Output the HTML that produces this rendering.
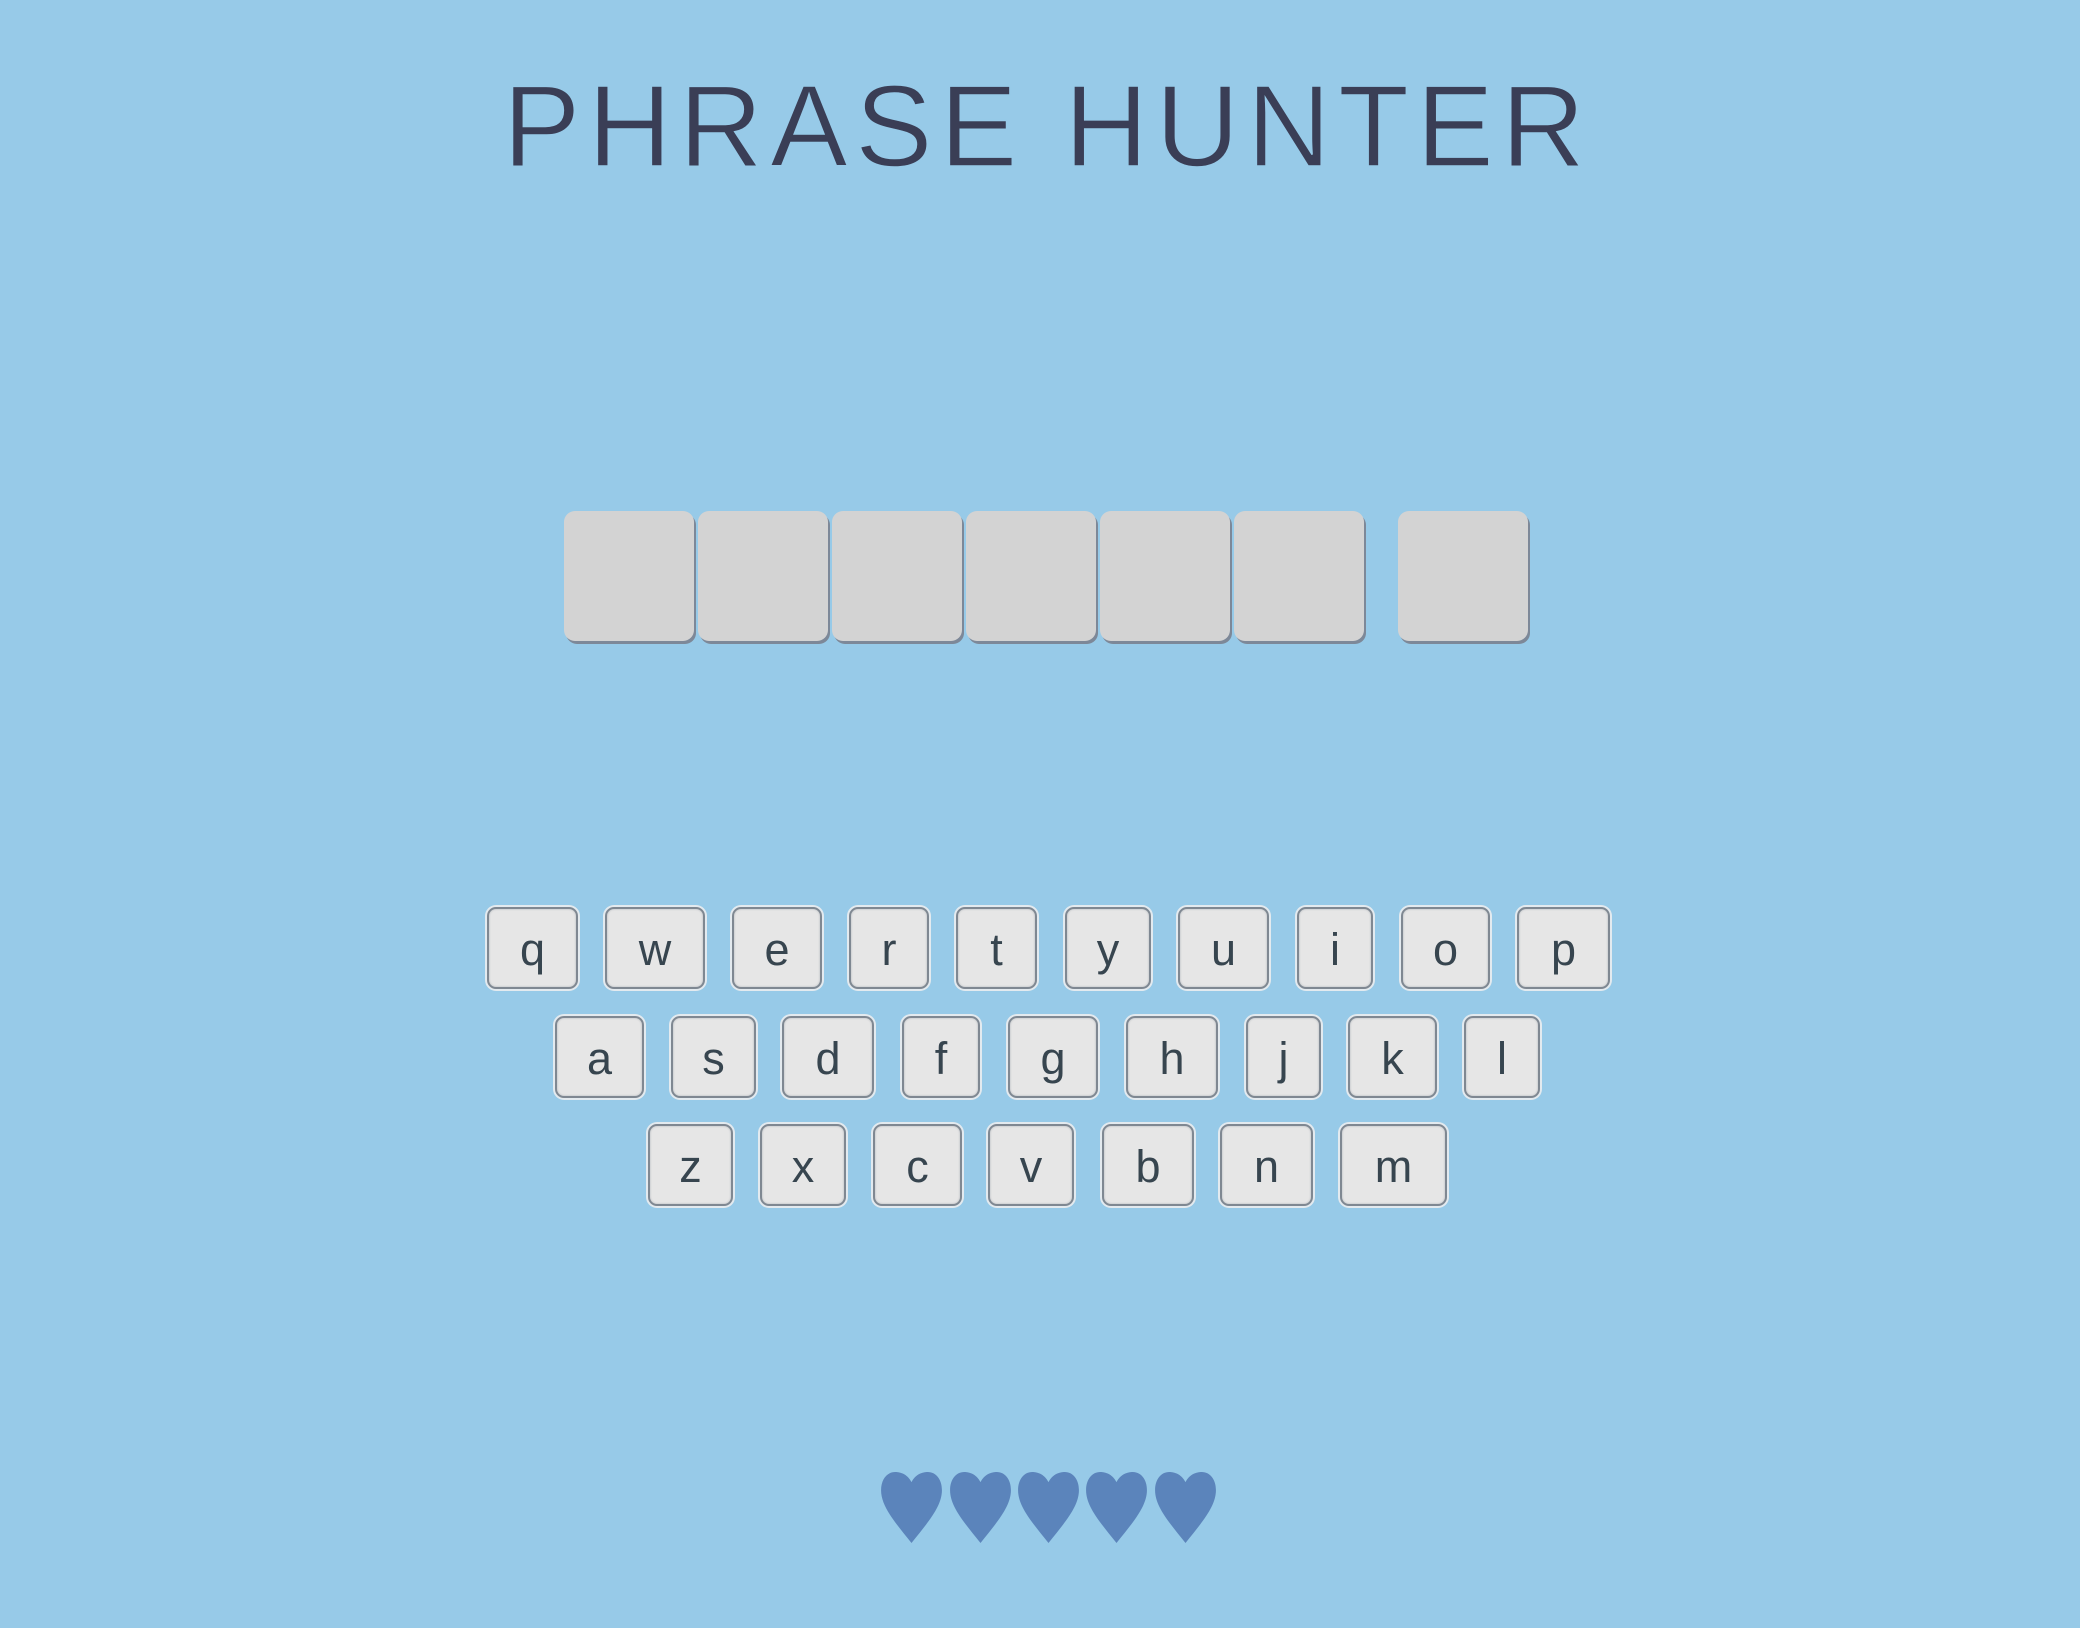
<!DOCTYPE html>
<html><head><meta charset="utf-8"><style>
html,body{margin:0;padding:0}
body{width:2080px;height:1628px;background:#97cae8;position:relative;overflow:hidden;font-family:"Liberation Sans",sans-serif}
.t{position:absolute;left:0;top:0}
.b{position:absolute;width:130px;height:130px;top:511px;background:#d3d3d3;border-radius:11px;box-shadow:2px 3px 0 #7d8898}
.k{position:absolute;box-sizing:border-box;height:82px;background:#e6e6e6;border:2px solid #7f8892;box-shadow:0 0 0 2px #e3eaef, inset 0 0 2px #b0b5ba;border-radius:9px;color:#37454f;font-size:45px;text-align:center;line-height:82px}
.h{position:absolute;top:1472px;width:61px;height:71px}
</style></head><body>
<svg class="t" width="2080" height="200"><text x="503" y="166" font-family="Liberation Sans, sans-serif" font-size="116" fill="#3a3e56" stroke="#97cae8" stroke-width="1.5" textLength="1082" lengthAdjust="spacing">PHRASE HUNTER</text></svg>

<div class="b" style="left:564px"></div>
<div class="b" style="left:698px"></div>
<div class="b" style="left:832px"></div>
<div class="b" style="left:966px"></div>
<div class="b" style="left:1100px"></div>
<div class="b" style="left:1234px"></div>
<div class="b" style="left:1398px"></div>

<div class="k" style="top:907px;left:487px;width:91px">q</div>
<div class="k" style="top:907px;left:605px;width:100px">w</div>
<div class="k" style="top:907px;left:732px;width:90px">e</div>
<div class="k" style="top:907px;left:849px;width:80px">r</div>
<div class="k" style="top:907px;left:956px;width:81px">t</div>
<div class="k" style="top:907px;left:1065px;width:86px">y</div>
<div class="k" style="top:907px;left:1178px;width:91px">u</div>
<div class="k" style="top:907px;left:1297px;width:76px">i</div>
<div class="k" style="top:907px;left:1401px;width:89px">o</div>
<div class="k" style="top:907px;left:1517px;width:93px">p</div>

<div class="k" style="top:1016px;left:555px;width:89px">a</div>
<div class="k" style="top:1016px;left:671px;width:85px">s</div>
<div class="k" style="top:1016px;left:782px;width:92px">d</div>
<div class="k" style="top:1016px;left:902px;width:78px">f</div>
<div class="k" style="top:1016px;left:1008px;width:90px">g</div>
<div class="k" style="top:1016px;left:1126px;width:92px">h</div>
<div class="k" style="top:1016px;left:1246px;width:75px">j</div>
<div class="k" style="top:1016px;left:1348px;width:89px">k</div>
<div class="k" style="top:1016px;left:1464px;width:76px">l</div>

<div class="k" style="top:1124px;left:648px;width:85px">z</div>
<div class="k" style="top:1124px;left:760px;width:86px">x</div>
<div class="k" style="top:1124px;left:873px;width:89px">c</div>
<div class="k" style="top:1124px;left:988px;width:86px">v</div>
<div class="k" style="top:1124px;left:1102px;width:92px">b</div>
<div class="k" style="top:1124px;left:1220px;width:93px">n</div>
<div class="k" style="top:1124px;left:1340px;width:107px">m</div>

<svg class="h" style="left:881px" viewBox="0 0 60 70"><path d="M30 10C26 2 19 0 14 0C6 0 0 7 0 18C0 34 14 50 30 70C46 50 60 34 60 18C60 7 54 0 46 0C41 0 34 2 30 10Z" fill="#5b84bb"/></svg>
<svg class="h" style="left:950px" viewBox="0 0 60 70"><path d="M30 10C26 2 19 0 14 0C6 0 0 7 0 18C0 34 14 50 30 70C46 50 60 34 60 18C60 7 54 0 46 0C41 0 34 2 30 10Z" fill="#5b84bb"/></svg>
<svg class="h" style="left:1018px" viewBox="0 0 60 70"><path d="M30 10C26 2 19 0 14 0C6 0 0 7 0 18C0 34 14 50 30 70C46 50 60 34 60 18C60 7 54 0 46 0C41 0 34 2 30 10Z" fill="#5b84bb"/></svg>
<svg class="h" style="left:1086px" viewBox="0 0 60 70"><path d="M30 10C26 2 19 0 14 0C6 0 0 7 0 18C0 34 14 50 30 70C46 50 60 34 60 18C60 7 54 0 46 0C41 0 34 2 30 10Z" fill="#5b84bb"/></svg>
<svg class="h" style="left:1155px" viewBox="0 0 60 70"><path d="M30 10C26 2 19 0 14 0C6 0 0 7 0 18C0 34 14 50 30 70C46 50 60 34 60 18C60 7 54 0 46 0C41 0 34 2 30 10Z" fill="#5b84bb"/></svg>
</body></html>
